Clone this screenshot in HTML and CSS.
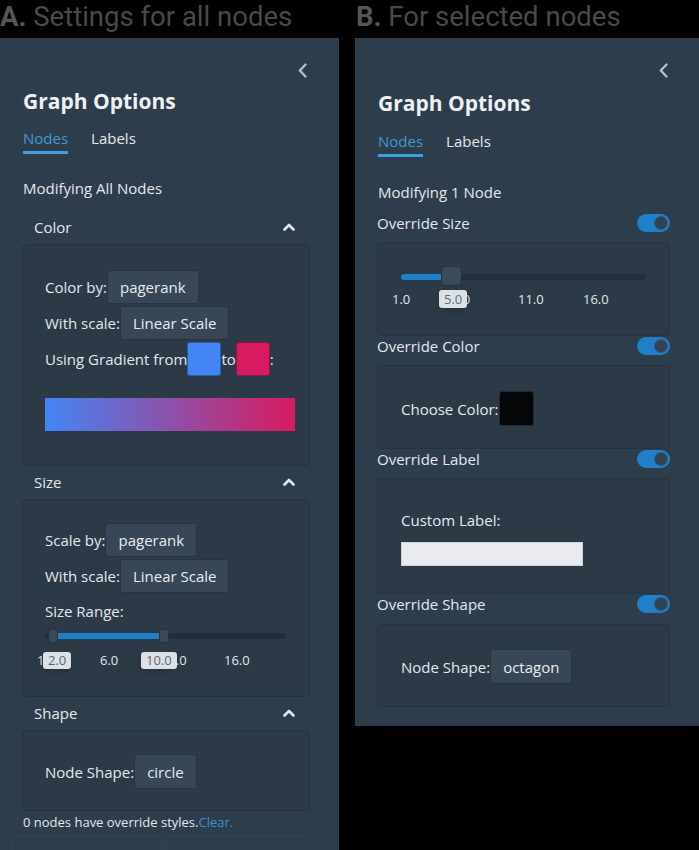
FILE: index.html
```html
<!DOCTYPE html>
<html>
<head>
<meta charset="utf-8">
<link rel="stylesheet" href="styles.css">
</head>
<body>
<div class="page">
  <section class="col col-a">
    <h1 class="caption"><b>A.</b> Settings for all nodes</h1>
    <div class="panel panel-a">
      <div class="topbar"><svg class="back" viewBox="0 0 9 15"><polyline points="7.5,1.5 1.8,7.5 7.5,13.5"/></svg></div>
      <h2 class="title">Graph Options</h2>
      <nav class="tabs"><span class="tab active">Nodes</span><span class="tab">Labels</span></nav>
      <p class="modifying">Modifying All Nodes</p>

      <div class="sec-head"><span>Color</span><svg class="caret" viewBox="0 0 12 8"><polyline points="1.5,6.5 6,2 10.5,6.5"/></svg></div>
      <div class="box box-color">
        <div class="field"><span>Color by:</span><span class="select">pagerank</span></div>
        <div class="field"><span>With scale:</span><span class="select">Linear Scale</span></div>
        <div class="field"><span>Using Gradient from</span><span class="swatch sw-blue"></span><span>to</span><span class="swatch sw-red"></span><span>:</span></div>
        <div class="grad"></div>
      </div>

      <div class="sec-head"><span>Size</span><svg class="caret" viewBox="0 0 12 8"><polyline points="1.5,6.5 6,2 10.5,6.5"/></svg></div>
      <div class="box box-size">
        <div class="field"><span>Scale by:</span><span class="select">pagerank</span></div>
        <div class="field"><span>With scale:</span><span class="select">Linear Scale</span></div>
        <div class="range-label">Size Range:</div>
        <div class="slider slider-a">
          <div class="track"></div>
          <div class="fill" style="left:8px;width:111px"></div>
          <div class="handle" style="left:3px"></div>
          <div class="handle" style="left:114px"></div>
        </div>
        <div class="ticks ticks-a">
          <span class="tick" style="left:-8px">1.0</span>
          <span class="tick" style="left:55px">6.0</span>
          <span class="tick" style="left:116px">11.0</span>
          <span class="tick" style="left:179px">16.0</span>
          <span class="tip" style="left:-2px">2.0</span>
          <span class="tip" style="left:96px">10.0</span>
        </div>
      </div>

      <div class="sec-head"><span>Shape</span><svg class="caret" viewBox="0 0 12 8"><polyline points="1.5,6.5 6,2 10.5,6.5"/></svg></div>
      <div class="box box-shape">
        <div class="field field-tall"><span>Node Shape:</span><span class="select select-tall">circle</span></div>
      </div>
      <p class="footer">0 nodes have override styles.<a class="clear">Clear.</a></p>
      <div class="ghost"><div class="ghost-box g1"></div><div class="ghost-box g2"></div></div>
    </div>
  </section>

  <section class="col col-b">
    <h1 class="caption"><b>B.</b> For selected nodes</h1>
    <div class="panel panel-b">
      <div class="topbar"><svg class="back" viewBox="0 0 9 15"><polyline points="7.5,1.5 1.8,7.5 7.5,13.5"/></svg></div>
      <h2 class="title">Graph Options</h2>
      <nav class="tabs"><span class="tab active">Nodes</span><span class="tab">Labels</span></nav>
      <p class="modifying">Modifying 1 Node</p>

      <div class="sw-head first"><span>Override Size</span><span class="toggle"></span></div>
      <div class="box box-bsize">
        <div class="slider slider-b">
          <div class="track"></div>
          <div class="fill" style="left:0;width:49px"></div>
          <div class="handle handle-b" style="left:40px"></div>
        </div>
        <div class="ticks ticks-b">
          <span class="tick" style="left:-9px">1.0</span>
          <span class="tick" style="left:51px">6.0</span>
          <span class="tick" style="left:117px">11.0</span>
          <span class="tick" style="left:182px">16.0</span>
          <span class="tip" style="left:38px">5.0</span>
        </div>
      </div>

      <div class="sw-head"><span>Override Color</span><span class="toggle"></span></div>
      <div class="box box-bcolor">
        <div class="field field-tall"><span>Choose Color:</span><span class="swatch sw-black"></span></div>
      </div>

      <div class="sw-head"><span>Override Label</span><span class="toggle"></span></div>
      <div class="box box-blabel">
        <div class="plain-label">Custom Label:</div>
        <div class="text-input"></div>
      </div>

      <div class="sw-head last"><span>Override Shape</span><span class="toggle"></span></div>
      <div class="box box-bshape">
        <div class="field field-tall"><span>Node Shape:</span><span class="select select-tall">octagon</span></div>
      </div>
    </div>
  </section>
</div>
</body>
</html>
```

FILE: styles.css
```css
html, body {
  margin: 0;
  padding: 0;
}
body {
  background: #000;
  font-family: "Open Sans", "Noto Sans", sans-serif;
  color: #e4e8ec;
  font-size: 15px;
}
.page {
  display: flex;
  gap: 16px;
  height: 850px;
  overflow: hidden;
}
.col {
  display: flex;
  flex-direction: column;
}
.col-a { width: 339px; }
.col-b { width: 344px; }

.caption {
  flex: none;
  margin: 0;
  height: 38px;
  font-family: Roboto, sans-serif;
  font-weight: 400;
  font-size: 27.5px;
  line-height: 33px;
  color: #4a4a4a;
  white-space: nowrap;
}
.caption b {
  font-weight: 700;
  color: #555;
}
.col-b .caption { padding-left: 1px; }

.panel {
  background: #2e3d4b;
  padding: 0 29px 0 22px;
  box-sizing: border-box;
}
.panel-a {
  flex: 1;
  min-height: 0;
  overflow: hidden;
}
.panel-b { padding-bottom: 19px; }

.topbar {
  height: 48px;
  display: flex;
  justify-content: flex-end;
  align-items: flex-start;
}
.panel-b .topbar { height: 50px; }
.back {
  width: 9px;
  height: 15px;
  margin-top: 25px;
  margin-right: 3px;
}
.panel-b .back { margin-right: 2px; }
.back polyline {
  fill: none;
  stroke: #aebfcd;
  stroke-width: 2.4;
  stroke-linecap: round;
  stroke-linejoin: round;
}

.title {
  margin: 0 0 0 1px;
  font-weight: 700;
  font-size: 21px;
  line-height: 30px;
  color: #eef1f4;
}
.tabs {
  display: flex;
  gap: 23px;
  margin: 12px 0 0 1px;
}
.panel-b .tabs { margin-top: 13px; }
.tab {
  font-size: 15px;
  line-height: 20px;
  padding-bottom: 3px;
  border-bottom: 3px solid transparent;
}
.tab.active {
  color: #3f9ad6;
  border-bottom-color: #3d9fdf;
}
.modifying {
  margin: 24px 0 0 1px;
  font-size: 15px;
  line-height: 20px;
}
.panel-b .modifying { margin-top: 25px; }

.sec-head {
  display: flex;
  justify-content: space-between;
  align-items: center;
  height: 20px;
  padding: 0 15px 0 12px;
  margin: 19px 0 7px;
}
.box + .sec-head { margin-top: 6px; }
.caret {
  width: 12px;
  height: 8px;
}
.caret polyline {
  fill: none;
  stroke: #e2e7eb;
  stroke-width: 2.6;
  stroke-linecap: round;
  stroke-linejoin: round;
}

.box {
  border: 1px solid #27343f;
  border-radius: 4px;
  background: #2c3a47;
}
.box-color { padding: 25px 14px 34px 22px; }
.box-size { padding: 23px 14px 27px 22px; }
.box-shape { padding: 23px 14px 21px 22px; }

.field {
  display: flex;
  align-items: center;
  height: 34px;
  white-space: nowrap;
}
.field + .field { margin-top: 2px; }
.field-tall { height: 35px; }

.select {
  height: 34px;
  box-sizing: border-box;
  padding: 0 12px;
  display: inline-flex;
  align-items: center;
  background: #384756;
  border: 1px solid #27343f;
  border-radius: 3px;
  color: #e8ecef;
}
.select-tall { height: 35px; }

.swatch {
  width: 34px;
  height: 34px;
  box-sizing: border-box;
  border-radius: 3px;
  border: 1px solid rgba(0, 0, 0, 0.3);
}
.sw-blue { background: #4285f4; }
.sw-red { background: #d81b60; }
.sw-black {
  width: 35px;
  height: 35px;
  background: #050607;
  border-color: #202830;
}

.grad {
  height: 33px;
  margin-top: 22px;
  background: linear-gradient(90deg, #4286f4, #d81b60);
}

.range-label {
  margin-top: 8px;
  line-height: 20px;
}

.slider {
  position: relative;
}
.slider-a {
  width: 241px;
  margin-top: 8px;
  padding-top: 4px;
}
.slider-b {
  margin-top: 23px;
  padding-top: 8px;
}
.track {
  height: 6px;
  border-radius: 3px;
  background: #212e39;
}
.fill {
  position: absolute;
  height: 6px;
  border-radius: 3px;
  background: #1d80ca;
}
.slider-a .fill { top: 4px; }
.slider-b .fill { top: 8px; }
.handle {
  position: absolute;
  top: 0;
  width: 10px;
  height: 14px;
  box-sizing: border-box;
  background: #3a4957;
  border: 1px solid #26323d;
  border-radius: 2px;
}
.handle-b {
  width: 21px;
  height: 20px;
  border-radius: 4px;
  background: #3b4a58;
}

.ticks {
  position: relative;
  font-size: 13px;
}
.ticks-a {
  height: 17px;
  margin-top: 13px;
  line-height: 17px;
}
.ticks-b {
  height: 18px;
  margin-top: 10px;
  line-height: 18px;
}
.tick {
  position: absolute;
  top: 0;
  color: #e2e6ea;
}
.tip {
  position: absolute;
  top: 0;
  padding: 0 5px;
  background: #dce1e5;
  color: #5d6872;
  border-radius: 3px;
  box-shadow: 0 3px 8px rgba(0, 0, 0, 0.15);
}

.footer {
  margin: 1px 0 0 1px;
  font-size: 13px;
  line-height: 20px;
}
.clear { color: #3d8fd0; }

.ghost {
  display: flex;
  gap: 3px;
  margin: 3px 0 0 -10px;
}
.ghost-box {
  height: 40px;
  border: 1px solid rgba(255, 255, 255, 0.03);
  border-bottom: none;
}
.g1 { width: 163px; }
.g2 { width: 158px; }

.sw-head {
  display: flex;
  justify-content: space-between;
  align-items: center;
  height: 20px;
  margin-bottom: 9px;
}
.sw-head.first { margin-top: 11px; }
.sw-head.last { margin-bottom: 10px; }
.toggle {
  position: relative;
  width: 33px;
  height: 18px;
  border-radius: 9px;
  background: #1f80c9;
}
.toggle::after {
  content: "";
  position: absolute;
  top: 2px;
  right: 2px;
  width: 14px;
  height: 14px;
  box-sizing: border-box;
  border-radius: 50%;
  background: #34424f;
  border: 1px solid #2a5c80;
}

.box-bsize { padding: 0 23px 27px; }
.box-bcolor { padding: 25px 23px 22px; }
.box-blabel { padding: 31px 23px 27px; }
.box-bshape { padding: 24px 23px 22px; }

.plain-label { line-height: 20px; }
.text-input {
  width: 182px;
  height: 24px;
  margin-top: 12px;
  box-sizing: border-box;
  background: #e9ebee;
  border: 1px solid #cfd4d8;
}
```
